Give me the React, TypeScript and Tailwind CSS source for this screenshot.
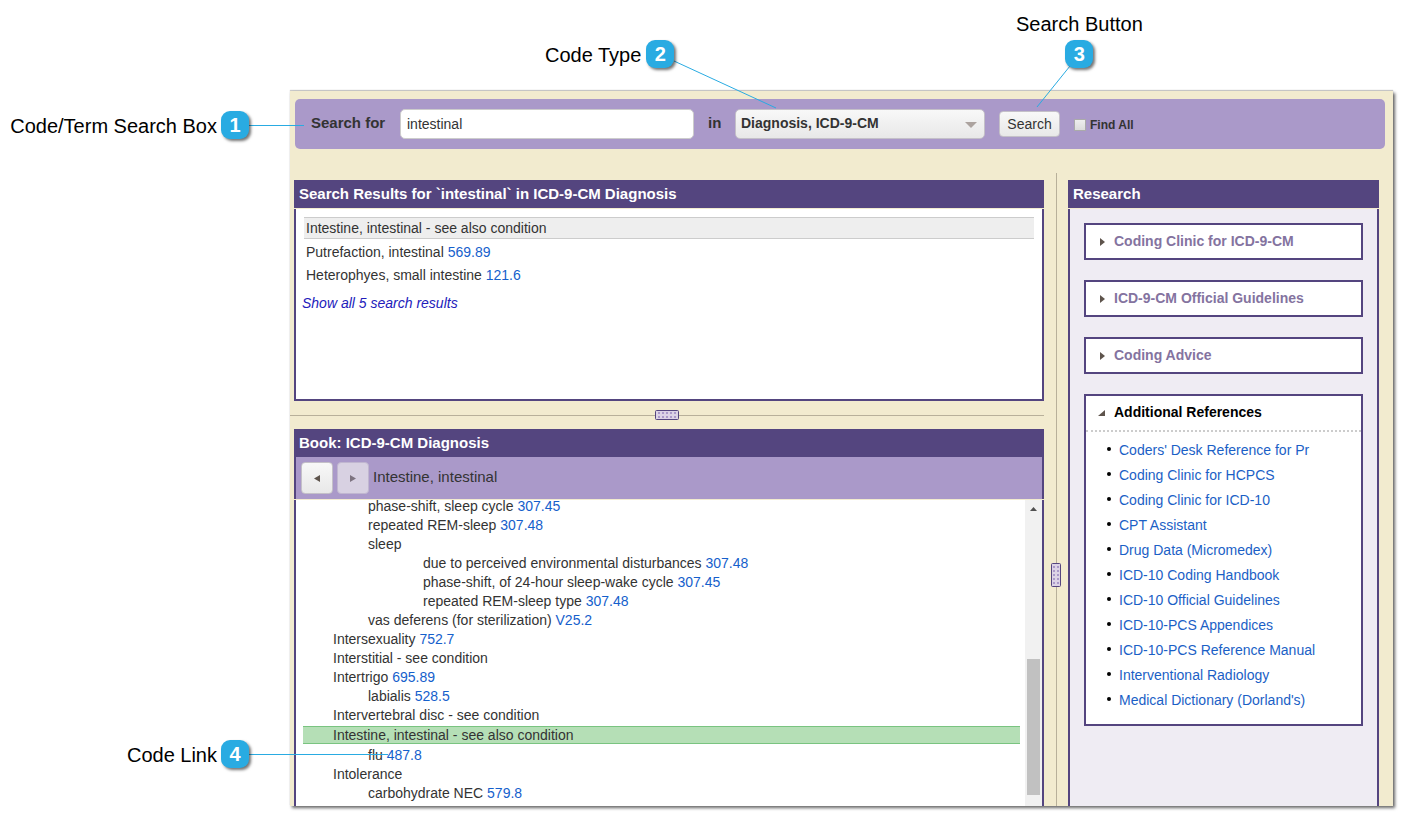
import React, { useState } from 'react';

interface BookEntry {
    level: 0 | 1 | 2;
    text: string;
    code?: string;
    active?: boolean;
}

const bookEntries: BookEntry[] = [
    { level: 1, text: 'phase-shift, sleep cycle', code: '307.45' },
    { level: 1, text: 'repeated REM-sleep', code: '307.48' },
    { level: 1, text: 'sleep' },
    { level: 2, text: 'due to perceived environmental disturbances', code: '307.48' },
    { level: 2, text: 'phase-shift, of 24-hour sleep-wake cycle', code: '307.45' },
    { level: 2, text: 'repeated REM-sleep type', code: '307.48' },
    { level: 1, text: 'vas deferens (for sterilization)', code: 'V25.2' },
    { level: 0, text: 'Intersexuality', code: '752.7' },
    { level: 0, text: 'Interstitial - see condition' },
    { level: 0, text: 'Intertrigo', code: '695.89' },
    { level: 1, text: 'labialis', code: '528.5' },
    { level: 0, text: 'Intervertebral disc - see condition' },
    { level: 0, text: 'Intestine, intestinal - see also condition', active: true },
    { level: 1, text: 'flu', code: '487.8' },
    { level: 0, text: 'Intolerance' },
    { level: 1, text: 'carbohydrate NEC', code: '579.8' },
];

const levelPadding = {
    0: 'pl-[30px]',
    1: 'pl-[65px]',
    2: 'pl-[120px]',
};

const researchSections = ['Coding Clinic for ICD-9-CM', 'ICD-9-CM Official Guidelines', 'Coding Advice'];

const references = [
    "Coders' Desk Reference for Pr",
    'Coding Clinic for HCPCS',
    'Coding Clinic for ICD-10',
    'CPT Assistant',
    'Drug Data (Micromedex)',
    'ICD-10 Coding Handbook',
    'ICD-10 Official Guidelines',
    'ICD-10-PCS Appendices',
    'ICD-10-PCS Reference Manual',
    'Interventional Radiology',
    "Medical Dictionary (Dorland's)",
];

function CodeLink({ code }: { code: string }) {
    return <a href="#" className="text-[#1560cc]">{code}</a>;
}

function PanelTitle({ children }: { children: React.ReactNode }) {
    return (
        <h2 className="h-7 shrink-0 bg-[#54457f] px-[5px] text-[15px] leading-7 font-bold text-white">{children}</h2>
    );
}

function Badge({ n }: { n: number }) {
    return (
        <span className="flex h-7 w-7 shrink-0 items-center justify-center rounded-[9px] bg-[#29abe2] text-xl leading-7 font-bold text-white shadow-[2px_2px_3px_rgba(0,0,0,0.55)]">
            {n}
        </span>
    );
}

function SearchBar() {
    const [term, setTerm] = useState('intestinal');

    return (
        <form className="mr-2 mt-2 ml-[5px] flex h-[50px] shrink-0 items-center rounded-[5px] bg-[#aa99c9] pl-4 text-[#333]" onSubmit={(e) => e.preventDefault()}>
            <label htmlFor="term" className="w-[89px] pb-0.5 text-[15px] font-bold">Search for</label>
            <input
                id="term"
                type="text"
                value={term}
                onChange={(e) => setTerm(e.target.value)}
                className="h-[30px] w-[294px] rounded-[5px] border border-[#ccc] bg-white px-1.5 text-sm outline-none"
            />
            <label htmlFor="codeType" className="w-[41px] pb-0.5 pl-[14px] text-[15px] font-bold">in</label>
            <div className="relative w-[250px]">
                <select id="codeType" className="h-[30px] w-full appearance-none rounded-[5px] border border-[#c4c0c8] bg-linear-to-b from-[#f8f8f8] to-[#e8e8e8] px-[5px] pb-0.5 text-sm font-bold outline-none">
                    <option>Diagnosis, ICD-9-CM</option>
                </select>
                <svg className="pointer-events-none absolute top-[13px] right-2 h-1.5 w-3" viewBox="0 0 12 6">
                    <path d="M0 0h12L6 6z" fill="#aca39f" />
                </svg>
            </div>
            <button type="submit" className="ml-[14px] h-[26px] w-[61px] rounded border border-[#c4c0c8] bg-linear-to-b from-[#f8f8f8] to-[#e8e8e8] text-sm">
                Search
            </button>
            <label className="ml-[14px] flex items-center gap-1 pt-[2px] text-xs font-bold">
                <input type="checkbox" className="h-3 w-3 appearance-none border border-[#aaa] bg-linear-to-b from-[#eee] to-[#dcdcdc] checked:bg-[#54457f]" />
                Find All
            </label>
        </form>
    );
}

function SearchResults() {
    return (
        <section className="ml-1 flex h-[221px] shrink-0 flex-col gap-px">
            <PanelTitle>Search Results for `intestinal` in ICD-9-CM Diagnosis</PanelTitle>
            <div className="flex-1 border-2 border-t-0 border-[#54457f] bg-white p-2 text-sm text-[#333]">
                <ul>
                    <li className="h-[22px] border-y border-[#ccc] bg-[#eee] px-[2px] leading-5">Intestine, intestinal - see also condition</li>
                    <li className="mt-[2px] px-[2px] leading-[23px]">Putrefaction, intestinal <CodeLink code="569.89" /></li>
                    <li className="px-[2px] leading-[23px]">Heterophyes, small intestine <CodeLink code="121.6" /></li>
                </ul>
                <a href="#" className="-ml-0.5 mt-1.5 block leading-5 text-[#221bbb] italic">Show all 5 search results</a>
            </div>
        </section>
    );
}

function HorizontalSplitter() {
    return (
        <div className="flex h-7 shrink-0 items-center">
            <span className="h-px flex-1 bg-[#b8b09a]" />
            <svg className="h-2.5 w-6" viewBox="0 0 24 10">
                <rect x="0.5" y="0.5" width="23" height="9" rx="1" fill="#dcd3e6" stroke="#54457f" />
                <path d="M3 3h18M3 7h18" stroke="#aa99c9" strokeWidth="2" strokeDasharray="2 2" />
            </svg>
            <span className="h-px flex-1 bg-[#b8b09a]" />
        </div>
    );
}

function VerticalSplitter() {
    return (
        <div className="flex w-6 shrink-0 flex-col items-center">
            <span className="w-px flex-[390] bg-[#b8b09a]" />
            <svg className="h-6 w-2.5" viewBox="0 0 10 24">
                <rect x="0.5" y="0.5" width="9" height="23" rx="1" fill="#dcd3e6" stroke="#54457f" />
                <path d="M3 3v18M7 3v18" stroke="#aa99c9" strokeWidth="2" strokeDasharray="2 2" />
            </svg>
            <span className="w-px flex-[219] bg-[#b8b09a]" />
        </div>
    );
}

function Book() {
    return (
        <section className="ml-1 flex min-h-0 flex-1 flex-col">
            <PanelTitle>Book: ICD-9-CM Diagnosis</PanelTitle>
            <div className="flex h-[42px] shrink-0 items-center gap-1 border-x-2 border-[#54457f] bg-[#aa99c9] px-[5px] text-[#333]">
                <button aria-label="Previous" className="flex h-8 w-8 items-center justify-center rounded border border-[#c4c0c8] bg-linear-to-b from-[#f8f8f8] to-[#e8e8e8]">
                    <svg width="6" height="7" viewBox="0 0 6 7"><path d="M6 0v7L0 3.500z" fill="#5e544c" /></svg>
                </button>
                <button aria-label="Next" disabled className="flex h-8 w-8 items-center justify-center rounded border border-[#c0b6d0] bg-[#d8d1e2]">
                    <svg width="6" height="7" viewBox="0 0 6 7"><path d="M0 0v7l6-3.500z" fill="#7d7380" /></svg>
                </button>
                <span className="pb-0.5 text-[15px]">Intestine, intestinal</span>
            </div>
            <div className="mt-px flex min-h-0 flex-1 overflow-hidden border-x-2 border-[#54457f] bg-white">
                {/* list is scrolled a little past the top row */}
                <ul className="-mt-[3px] flex-1 pr-[5px] pl-[7px] text-sm leading-[19px] text-[#333]">
                    {bookEntries.map((entry, i) => (
                        <li
                            key={i}
                            className={`${levelPadding[entry.level]} ${entry.active ? 'mt-px mb-0.5 h-[18px] border-y border-[#79c480] bg-[#b5dfb6] leading-4' : 'h-[19px]'}`}
                        >
                            {entry.text} {entry.code && <CodeLink code={entry.code} />}
                        </li>
                    ))}
                </ul>
                <div className="flex w-[17px] flex-col items-center bg-[#f1f1f1]">
                    <svg className="mt-[7px] h-1 w-[7px] shrink-0" viewBox="0 0 7 4"><path d="M0 4h7L3.500 0z" fill="#505050" /></svg>
                    <span className="flex-1" />
                    <span className="mb-[11px] h-[136px] w-[13px] bg-[#c1c1c1]" />
                </div>
            </div>
        </section>
    );
}

function Research() {
    return (
        <section className="mt-[7px] mr-[14px] flex w-[311px] shrink-0 flex-col gap-px">
            <PanelTitle>Research</PanelTitle>
            <div className="flex flex-1 flex-col gap-5 border-x-2 border-[#54457f] bg-[#efecf3] p-[14px]">
                {researchSections.map((title) => (
                    <button key={title} className="flex h-[37px] items-center gap-[9px] border-2 border-[#54457f] bg-white pl-[14px] text-sm font-bold text-[#84739f]">
                        <svg width="5" height="8" viewBox="0 0 5 8"><path d="M0 0v8l5-4z" fill="#5e544c" /></svg>
                        <span className="pb-0.5">{title}</span>
                    </button>
                ))}
                <div className="border-2 border-[#54457f] bg-white pb-3 text-sm">
                    <button className="flex h-9 w-full items-center gap-[9px] border-b-2 border-dotted border-[#ccc] pl-3 font-bold text-black">
                        <svg width="7" height="6" viewBox="0 0 7 6"><path d="M7 0v6H0z" fill="#5e544c" /></svg>
                        <span className="pb-0.5">Additional References</span>
                    </button>
                    <ul className="pt-[5px] pl-[21px]">
                        {references.map((name) => (
                            <li key={name} className="flex h-[25px] items-center gap-2">
                                <span className="mb-0.5 h-1 w-1 rounded-full bg-black" />
                                <a href="#" className="text-[#1b5fc6]">{name}</a>
                            </li>
                        ))}
                    </ul>
                </div>
            </div>
        </section>
    );
}

export default function App() {
    return (
        <div className="relative flex h-screen flex-col bg-white pt-[91px] pr-[9px] pb-[9px] pl-[290px] font-['Liberation_Sans',Arial,sans-serif]">
            <main className="flex min-h-0 flex-1 flex-col bg-[#f2ebcf] shadow-[2px_2px_3px_rgba(0,0,0,0.6),0_-1px_1px_#ccc]">
                <SearchBar />
                <div className="mt-6 flex min-h-0 flex-1">
                    <div className="mt-[7px] flex min-w-0 flex-1 flex-col">
                        <SearchResults />
                        <HorizontalSplitter />
                        <Book />
                    </div>
                    <VerticalSplitter />
                    <Research />
                </div>
            </main>

            {/* Callouts pinned over the window */}
            <svg className="pointer-events-none absolute top-0 left-0" width="1200" height="800" stroke="#29abe2" fill="none">
                <path d="M249 125.500H304" />
                <path d="M674 61L776 108" />
                <path d="M1070 66L1037 107" />
                <path d="M249 754.500H388" />
            </svg>
            <div className="absolute top-[111px] left-0 flex w-[249px] items-center justify-end gap-1 text-xl text-black">
                <span className="pt-0.5 leading-6">Code/Term Search Box</span> <Badge n={1} />
            </div>
            <div className="absolute top-10 left-[545px] flex items-center gap-[5px] text-xl text-black">
                <span className="pt-0.5 leading-6">Code Type</span> <Badge n={2} />
            </div>
            <div className="absolute top-[10px] left-[1016px] flex flex-col items-center gap-0.5 text-xl text-black">
                <span>Search Button</span> <Badge n={3} />
            </div>
            <div className="absolute top-[740px] left-0 flex w-[249px] items-center justify-end gap-1 text-xl text-black">
                <span className="pt-0.5 leading-6">Code Link</span> <Badge n={4} />
            </div>
        </div>
    );
}
